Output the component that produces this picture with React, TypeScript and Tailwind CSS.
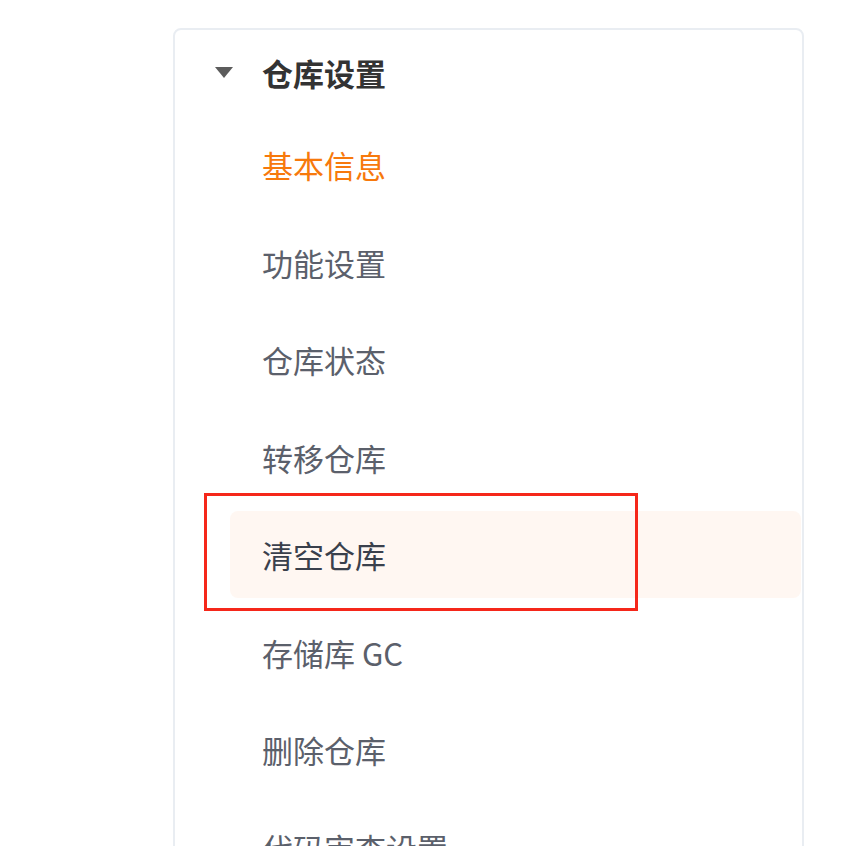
import React from "react";

const items = ["基本信息", "功能设置", "仓库状态", "转移仓库", "清空仓库", "存储库 GC", "删除仓库", "代码审查设置"];

export default function App() {
  return (
    <div
      className="relative h-[846px] w-[865px] overflow-hidden bg-white"
      style={{ fontFamily: '"Microsoft YaHei", "Noto Sans CJK SC", "Noto Sans", sans-serif' }}
    >
      <div className="ml-[173px] mt-[28px] h-[900px] w-[631px] rounded-[8px] border-2 border-[#e9edf2] pt-[22px]">
        <div className="flex h-[40px] items-center">
          <svg className="ml-[40px] h-[11px] w-[18px]" viewBox="0 0 18 11">
            <path d="M0 0 L18 0 L9 11 Z" fill="#5c5c5c" />
          </svg>
          <span className="ml-[29px] text-[31px] font-bold leading-none text-[#333333]">仓库设置</span>
        </div>
        <div className="ml-[55px] mr-[1px] mt-[29px] flex flex-col gap-[10.5px]">
          {items.map((t, i) => (
            <div
              key={t}
              className={
                "flex h-[87px] items-center rounded-[8px] pl-[32px] text-[31px] leading-none " +
                (i === 4 ? "bg-[#fff7f2] " : "") +
                (i === 0 ? "text-[#f7790c]" : i === 4 ? "text-[#3a404c]" : "text-[#5b606b]")
              }
            >
              {t}
            </div>
          ))}
        </div>
      </div>
      <div className="absolute left-[204px] top-[493px] h-[118px] w-[434px] border-[3px] border-[#f5271a]" />
    </div>
  );
}
